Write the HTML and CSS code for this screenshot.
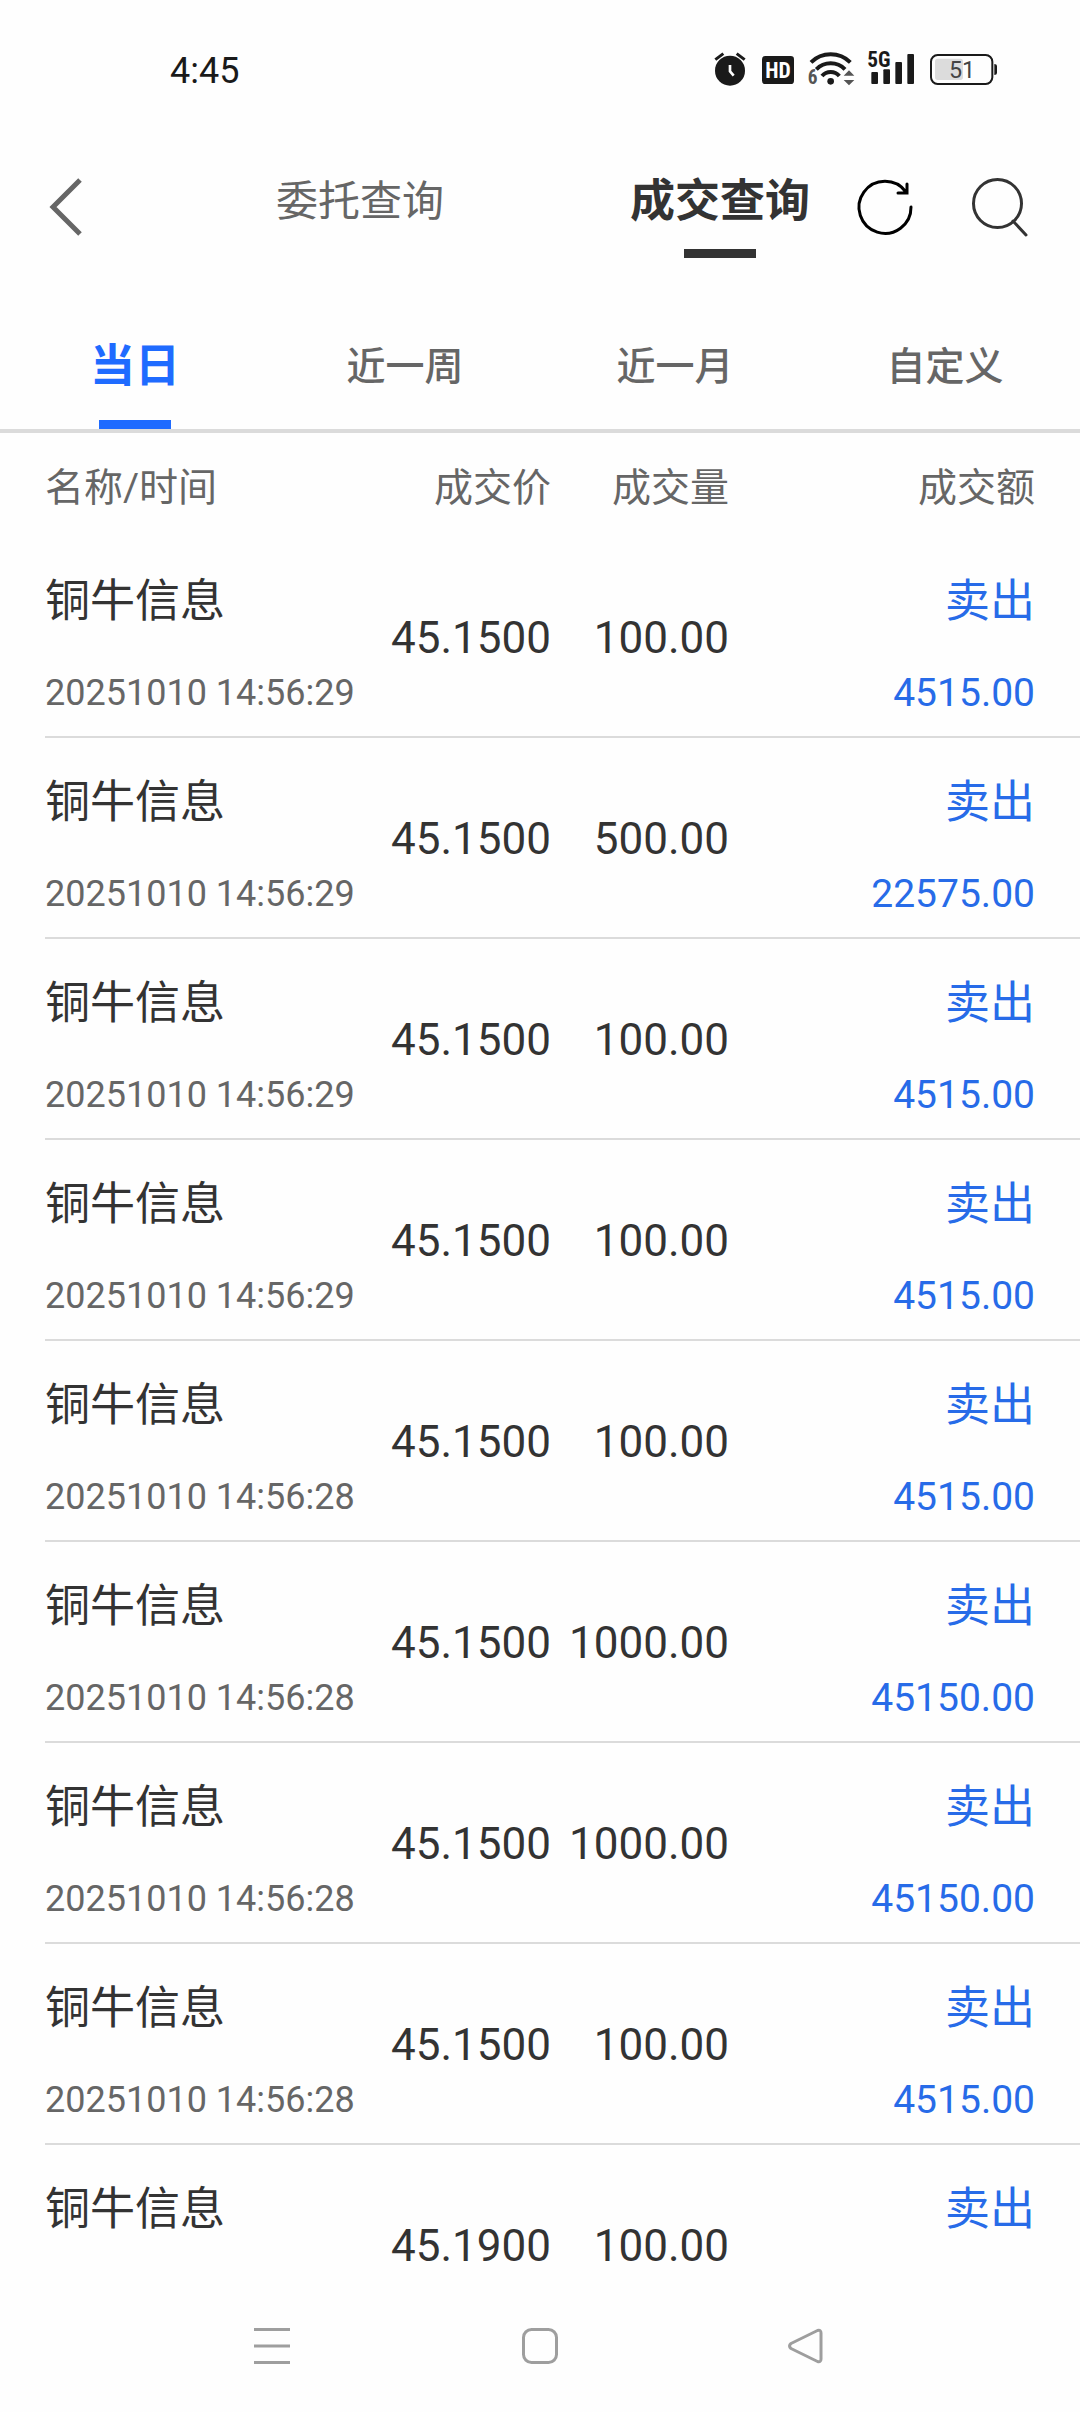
FILE: index.html
```html
<!DOCTYPE html>
<html lang="zh-CN">
<head>
<meta charset="utf-8">
<meta name="viewport" content="width=device-width, initial-scale=1">
<title>成交查询</title>
<link rel="stylesheet" href="styles.css">
</head>
<body>
<div class="status-bar">
  <time class="clock">4:45</time>
  <div class="status-icons">
    <svg width="38" height="34" viewBox="69 66 114 102" aria-hidden="true">
      <circle cx="120" cy="122" r="45" fill="#1a1a1a"/>
      <path d="M76 89L100 71M140 71L164 89" stroke="#1a1a1a" stroke-width="9" fill="none"/>
      <path d="M120 105V124L131 137" stroke="#fff" stroke-width="8" fill="none"/>
    </svg>
    <svg width="36" height="34" viewBox="213 66 108 102" aria-hidden="true">
      <rect x="216" y="78" width="96" height="84" rx="10" fill="#1a1a1a"/>
      <text class="glyph-label" x="264" y="143" font-size="65" text-anchor="middle" fill="#fff">HD</text>
    </svg>
    <svg width="50" height="34" viewBox="351 66 150 102" aria-hidden="true">
      <g fill="none" stroke="#1a1a1a" stroke-width="12">
        <path d="M363 97A84 84 0 0 1 481 97"/>
        <path d="M379 118A60 60 0 0 1 465 118"/>
        <path d="M396 138A34 34 0 0 1 448 138"/>
      </g>
      <circle cx="422" cy="154" r="10" fill="#1a1a1a"/>
      <text class="glyph-label" x="353" y="162" font-size="58" fill="#555">6</text>
      <path d="M461 137L477 121L493 137ZM461 150H493L477 166Z" fill="#555"/>
    </svg>
    <svg width="52" height="34" viewBox="531 66 156 102" aria-hidden="true">
      <text class="glyph-label" x="532" y="111" font-size="64" fill="#1a1a1a">5G</text>
      <g fill="#1a1a1a">
        <rect x="544" y="126" width="20" height="36" rx="3"/>
        <rect x="580" y="118" width="20" height="44" rx="3"/>
        <rect x="616" y="96" width="20" height="66" rx="3"/>
        <rect x="652" y="72" width="20" height="90" rx="3"/>
      </g>
    </svg>
    <svg width="68" height="34" viewBox="717 66 204 102" aria-hidden="true">
      <rect x="735" y="86" width="84" height="64" rx="8" fill="#dcdcdc"/>
      <rect x="723" y="75" width="184" height="87" rx="20" fill="none" stroke="#1a1a1a" stroke-width="6"/>
      <path d="M913 102Q921 102 921 108V129Q921 135 913 135Z" fill="#1a1a1a"/>
      <text class="battery-label" x="816" y="144" font-size="70" text-anchor="middle" fill="#444">51</text>
    </svg>
  </div>
</div>

<header class="app-header">
  <button class="icon-button back" type="button" aria-label="返回">
    <svg width="34" height="58" viewBox="0 0 34 58" fill="none" stroke="#666" stroke-width="5"><path d="M31 2L4 29L31 56"/></svg>
  </button>
  <nav class="title-tabs">
    <a class="title-tab" href="#orders">委托查询</a>
    <a class="title-tab active" href="#trades" aria-current="page">成交查询</a>
  </nav>
  <div class="actions">
    <button class="icon-button" type="button" aria-label="刷新">
      <svg width="56" height="58" viewBox="0 0 56 58" fill="none" stroke="#000" stroke-width="3" stroke-linecap="round"><path d="M54 29A26 26 0 1 1 49 14M50 6V15H41"/></svg>
    </button>
    <button class="icon-button" type="button" aria-label="搜索">
      <svg width="56" height="58" viewBox="0 0 56 58" fill="none" stroke="#333" stroke-width="3" stroke-linecap="round"><circle cx="25.5" cy="25.5" r="24"/><path d="M41 43L54 57"/></svg>
    </button>
  </div>
</header>

<nav class="range-tabs">
  <a class="range-tab active" href="#today" aria-current="true">当日</a>
  <a class="range-tab" href="#week">近一周</a>
  <a class="range-tab" href="#month">近一月</a>
  <a class="range-tab" href="#custom">自定义</a>
</nav>

<main class="trades" id="trades">
  <table class="trade-table">
    <thead>
      <tr><th class="col-name" scope="col">名称/时间</th><th class="col-number" scope="col">成交价</th><th class="col-number" scope="col">成交量</th><th class="col-amount" scope="col">成交额</th></tr>
    </thead>
    <tbody>
      <tr><td><span class="name">铜牛信息</span><span class="time">20251010 14:56:29</span></td><td class="number">45.1500</td><td class="number">100.00</td><td class="amount"><span class="side">卖出</span><span class="total">4515.00</span></td></tr>
      <tr><td><span class="name">铜牛信息</span><span class="time">20251010 14:56:29</span></td><td class="number">45.1500</td><td class="number">500.00</td><td class="amount"><span class="side">卖出</span><span class="total">22575.00</span></td></tr>
      <tr><td><span class="name">铜牛信息</span><span class="time">20251010 14:56:29</span></td><td class="number">45.1500</td><td class="number">100.00</td><td class="amount"><span class="side">卖出</span><span class="total">4515.00</span></td></tr>
      <tr><td><span class="name">铜牛信息</span><span class="time">20251010 14:56:29</span></td><td class="number">45.1500</td><td class="number">100.00</td><td class="amount"><span class="side">卖出</span><span class="total">4515.00</span></td></tr>
      <tr><td><span class="name">铜牛信息</span><span class="time">20251010 14:56:28</span></td><td class="number">45.1500</td><td class="number">100.00</td><td class="amount"><span class="side">卖出</span><span class="total">4515.00</span></td></tr>
      <tr><td><span class="name">铜牛信息</span><span class="time">20251010 14:56:28</span></td><td class="number">45.1500</td><td class="number">1000.00</td><td class="amount"><span class="side">卖出</span><span class="total">45150.00</span></td></tr>
      <tr><td><span class="name">铜牛信息</span><span class="time">20251010 14:56:28</span></td><td class="number">45.1500</td><td class="number">1000.00</td><td class="amount"><span class="side">卖出</span><span class="total">45150.00</span></td></tr>
      <tr><td><span class="name">铜牛信息</span><span class="time">20251010 14:56:28</span></td><td class="number">45.1500</td><td class="number">100.00</td><td class="amount"><span class="side">卖出</span><span class="total">4515.00</span></td></tr>
      <tr><td><span class="name">铜牛信息</span><span class="time"></span></td><td class="number">45.1900</td><td class="number">100.00</td><td class="amount"><span class="side">卖出</span><span class="total"></span></td></tr>
    </tbody>
  </table>
</main>

<footer class="system-nav">
  <button class="icon-button" type="button" aria-label="最近任务">
    <svg width="36" height="36" viewBox="0 0 36 36" stroke="#9e9e9e" stroke-width="3"><path d="M0 1.5H36M0 18H36M0 34.5H36"/></svg>
  </button>
  <button class="icon-button" type="button" aria-label="主屏幕">
    <svg width="36" height="36" viewBox="0 0 36 36" fill="none" stroke="#9e9e9e" stroke-width="3"><rect x="1.5" y="1.5" width="33" height="33" rx="8"/></svg>
  </button>
  <button class="icon-button" type="button" aria-label="返回上一页">
    <svg width="36" height="36" viewBox="0 0 36 36" fill="none" stroke="#9e9e9e" stroke-width="3" stroke-linejoin="round"><path d="M27.500 2.500L1 15.500Q-2 18 1 20.500L27.500 33.500Q31 34.500 31 31V5Q31 1.500 27.500 2.500Z"/></svg>
  </button>
</footer>
</body>
</html>
```
FILE: styles.css
```css
* {
  box-sizing: border-box;
}

body {
  display: flex;
  flex-direction: column;
  height: 100vh;
  margin: 0;
  background: #fefefe;
  color: #333;
  font-family: Roboto, "Noto Sans CJK SC", sans-serif;
}

a {
  color: inherit;
  text-decoration: none;
}

svg {
  display: block;
  overflow: visible;
}

.icon-button {
  padding: 0;
  border: 0;
  background: none;
}

/* Status bar */
.status-bar {
  display: flex;
  flex: none;
  align-items: center;
  justify-content: space-between;
  height: 140px;
  padding: 0 83px 0 170px;
}

.clock {
  padding-top: 2px;
  color: #1a1a1a;
  font-size: 36px;
  line-height: 40px;
}

.status-icons {
  display: flex;
  gap: 10px;
  padding-bottom: 2px;
}

.glyph-label {
  font-family: "Roboto Condensed", "Liberation Sans Narrow", Roboto, sans-serif;
  font-weight: 700;
}

.battery-label {
  font-family: Roboto, sans-serif;
}

/* Header */
.app-header {
  display: grid;
  flex: none;
  grid-template-columns: 2fr 5fr 2fr;
  align-items: center;
  height: 134px;
}

.back {
  justify-self: start;
  padding-left: 49px;
}

.title-tabs {
  display: grid;
  grid-template-columns: 1fr 1fr;
  gap: 20%;
  align-self: start;
  color: #666;
  font-size: 42px;
  line-height: 112px;
  text-align: center;
  white-space: nowrap;
}

.title-tab,
.range-tab {
  position: relative;
}

.title-tab {
  padding-top: 6px;
}

.title-tab.active {
  color: #333;
  font-size: 45px;
  font-weight: 700;
}

.title-tab.active::after,
.range-tab.active::after {
  position: absolute;
  bottom: 0;
  left: calc(50% - 36px);
  width: 72px;
  height: 9px;
  background: currentColor;
  content: "";
}

.actions {
  display: flex;
  justify-content: flex-end;
  gap: 59px;
  padding-right: 52px;
}

/* Date range */
.range-tabs {
  display: grid;
  flex: none;
  grid-template-columns: repeat(4, 1fr);
  border-bottom: 4px solid #dbdbdb;
  color: #666;
  font-size: 39px;
  font-weight: 500;
  line-height: 60px;
  text-align: center;
}

.range-tab {
  padding: 63px 0 32px;
}

.range-tab.active {
  color: #1f6bff;
  font-size: 45px;
  font-weight: 700;
}

/* Trades */
.trades {
  flex: 1;
  min-height: 0;
  overflow-y: auto;
  scrollbar-width: none;
}

.trade-table {
  width: calc(100% - 45px);
  margin-left: 45px;
  border-spacing: 0;
  table-layout: fixed;
}

.trade-table th {
  height: 104px;
  padding: 5px 0 0;
  color: #666;
  font-size: 39px;
  font-weight: 400;
  line-height: 60px;
  text-align: right;
  white-space: nowrap;
}

.trade-table .col-name {
  width: 328px;
  text-align: left;
}

.trade-table .col-number {
  width: 17.2%;
}

.trade-table .col-amount {
  padding-right: 45px;
}

.trade-table td {
  padding: 35px 0 13px;
  border-bottom: 2px solid #dbdbdb;
  font-size: 45px;
  line-height: 60px;
  white-space: nowrap;
}

.trade-table .number {
  padding: 2px 0 0;
  font-size: 44px;
  text-align: right;
}

.trade-table .amount {
  padding-right: 45px;
  color: #276be8;
  text-align: right;
}

.name,
.time,
.side,
.total {
  display: block;
  height: 60px;
}

.time,
.total {
  margin-top: 31px;
}

.time {
  color: #666;
  font-size: 36px;
}

.total {
  font-size: 39px;
}

/* System navigation */
.system-nav {
  display: grid;
  flex: none;
  grid-template-columns: repeat(3, 1fr);
  place-items: center;
  height: 132px;
  padding: 0 138px;
}
```
